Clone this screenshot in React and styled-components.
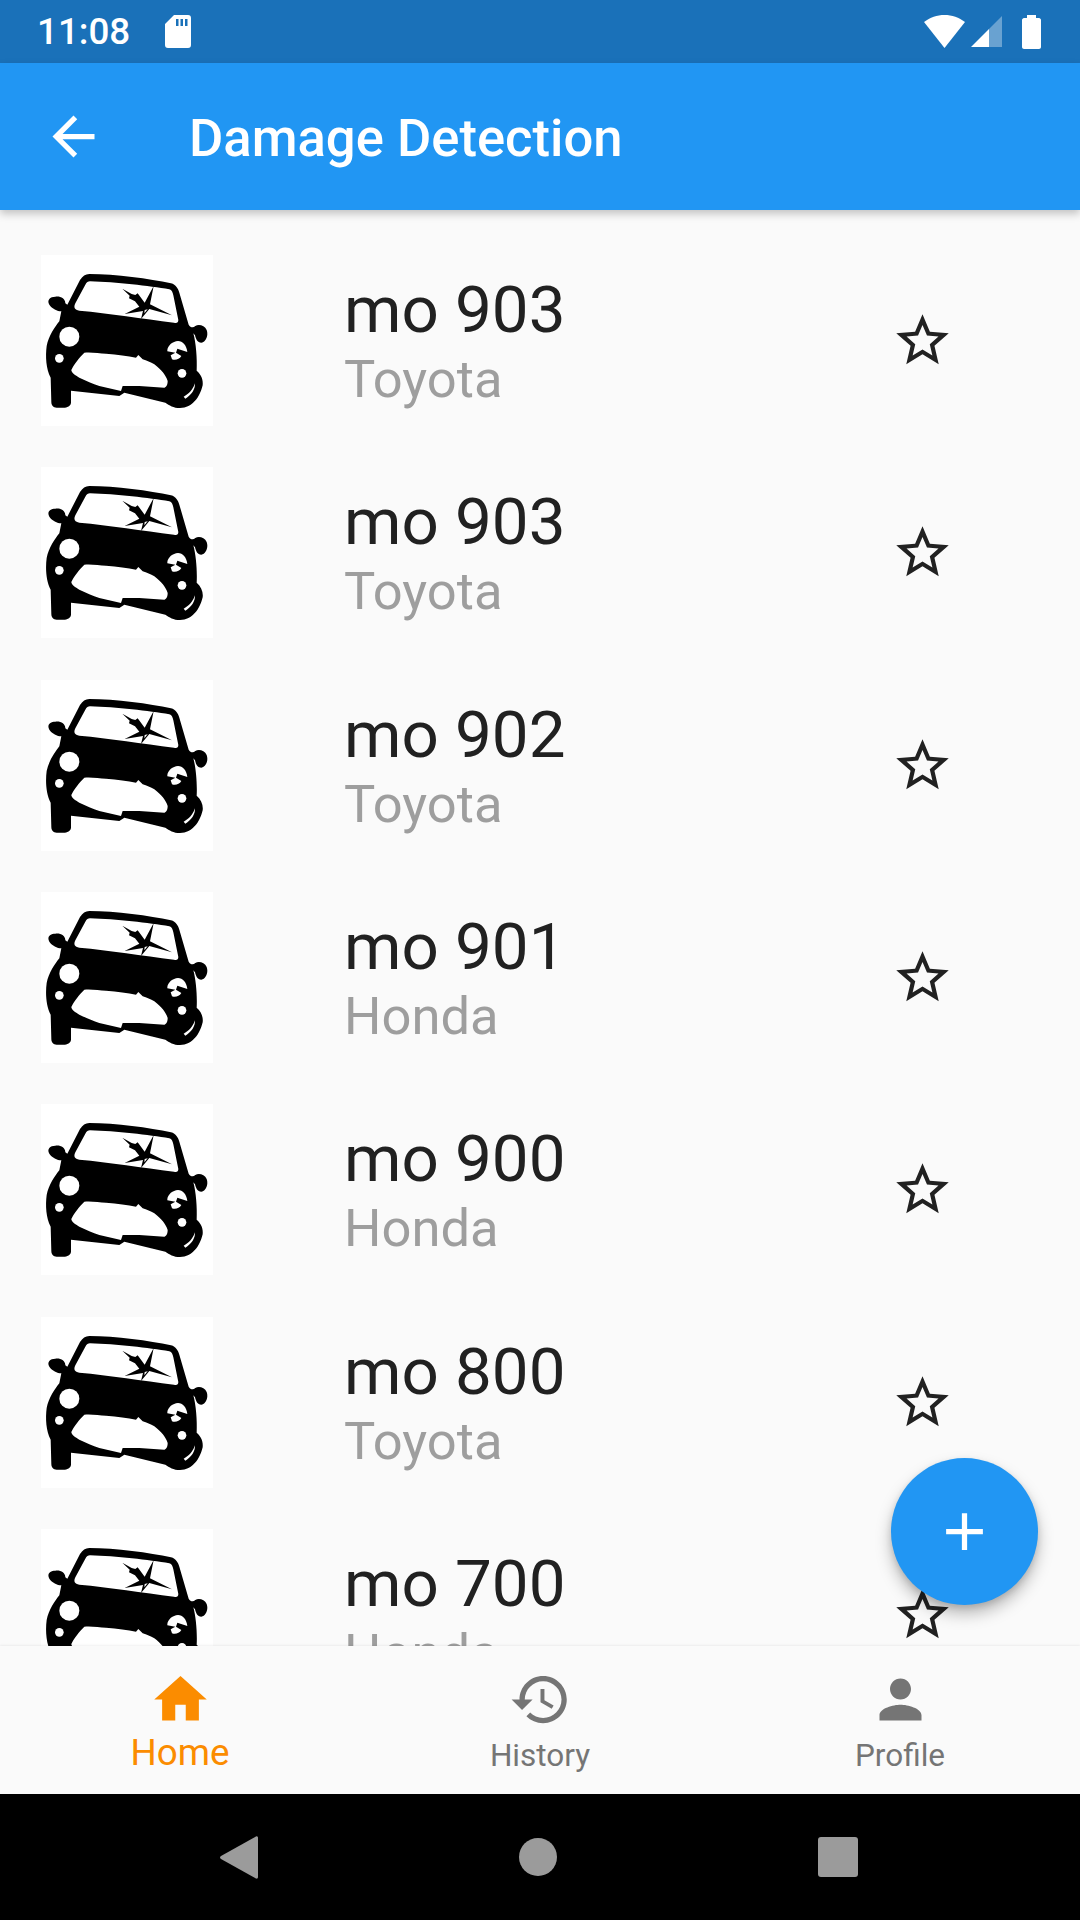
import React from "react";
import styled, { createGlobalStyle } from "styled-components";

const Global = createGlobalStyle`
  html, body { margin: 0; padding: 0; background: #fafafa; }
  body { font-family: Roboto, "Liberation Sans", sans-serif; }
  * { box-sizing: border-box; }
`;

const Screen = styled.div`
  width: 1080px;
  height: 1920px;
  display: flex;
  flex-direction: column;
  overflow: hidden;
  background: #fafafa;
`;

const StatusBar = styled.div`
  height: 63px;
  flex: none;
  background: #1a71b9;
  display: flex;
  align-items: center;
  padding: 0 39px 0 37px;
  color: #fff;
`;

const Time = styled.span`
  font-size: 36.75px;
  font-weight: 500;
  width: 128px;
`;

const StatusRight = styled.div`
  margin-left: auto;
  display: flex;
  align-items: center;
  gap: 6px;
`;

const StatusSpacer = styled.span`
  width: 8px;
`;

const AppBar = styled.header`
  height: 147px;
  flex: none;
  background: #2196f3;
  display: flex;
  align-items: center;
  padding-left: 42px;
  color: #fff;
  position: relative;
  z-index: 2;
  box-shadow: 0 4px 8px rgba(0, 0, 0, 0.22);
`;

const Title = styled.h1`
  margin: 4px 0 0 84px;
  font-size: 52.6px;
  font-weight: 500;
  line-height: 1;
`;

const Main = styled.main`
  flex: 1;
  min-height: 0;
  position: relative;
`;

const List = styled.div`
  height: 100%;
  overflow: hidden;
  padding-top: 24px;
`;

const Row = styled.div`
  height: 212.45px;
  display: flex;
  align-items: center;
  padding: 0 126px 0 41px;
`;

const Thumb = styled.div`
  width: 172px;
  height: 171px;
  flex: none;
  background: #fff;
`;

const RowText = styled.div`
  flex: 1;
  margin-left: 131px;
  display: flex;
  flex-direction: column;
`;

const Name = styled.div`
  font-size: 65.5px;
  color: #212121;
`;

const Maker = styled.div`
  font-size: 52.5px;
  color: #9e9e9e;
`;

const StarWrap = styled.span`
  color: #212121;
`;

const Fab = styled.button`
  position: absolute;
  right: 42px;
  bottom: 41px;
  width: 147px;
  height: 147px;
  border: 0;
  padding: 0;
  border-radius: 50%;
  background: #2196f3;
  color: #fff;
  display: flex;
  align-items: center;
  justify-content: center;
  box-shadow: 0 9px 16px rgba(0, 0, 0, 0.26), 0 3px 6px rgba(0, 0, 0, 0.12);
`;

const BottomNav = styled.nav`
  height: 148px;
  flex: none;
  background: #fafafa;
  display: flex;
  position: relative;
  z-index: 1;
  box-shadow: 0 -1px 2px rgba(0, 0, 0, 0.06);
`;

const NavItem = styled.div`
  flex: 1;
  display: flex;
  flex-direction: column;
  align-items: center;
  padding-top: 22px;
  color: ${(p) => (p.$active ? "#fb8c00" : "#757575")};
  font-size: ${(p) => (p.$active ? "36.75px" : "31.5px")};
  line-height: ${(p) => (p.$active ? "43px" : "37px")};
`;

const NavLabel = styled.span`
  margin-top: ${(p) => (p.$active ? "0" : "6px")};
`;

const SystemBar = styled.div`
  height: 126px;
  flex: none;
  background: #000;
  display: flex;
  align-items: center;
  padding-left: 220px;
  gap: 261px;
  color: #9b9b9b;
`;

const Svg = styled.svg`
  display: block;
  flex: none;
`;

const Icon = ({ d, size = 63 }) => (
  <Svg width={size} height={size} viewBox="0 0 24 24" fill="currentColor">
    <path d={d} />
  </Svg>
);

const ICONS = {
  back: "M20 11H7.83l5.59-5.59L12 4l-8 8 8 8 1.41-1.41L7.83 13H20v-2z",
  star: "M22 9.24l-7.19-.62L12 2 9.19 8.63 2 9.24l5.46 4.73L5.82 21 12 17.27 18.18 21l-1.63-7.03L22 9.24zM12 15.4l-3.76 2.27 1-4.28-3.32-2.88 4.38-.38L12 6.1l1.71 4.04 4.38.38-3.32 2.88 1 4.28L12 15.4z",
  add: "M19 13h-6v6h-2v-6H5v-2h6V5h2v6h6v2z",
  home: "M10 20v-6h4v6h5v-8h3L12 3 2 12h3v8z",
  history: "M13 3c-4.97 0-9 4.03-9 9H1l3.89 3.89.07.14L9 12H6c0-3.87 3.13-7 7-7s7 3.13 7 7-3.13 7-7 7c-1.93 0-3.68-.79-4.94-2.06l-1.42 1.42C8.27 19.99 10.51 21 13 21c4.97 0 9-4.03 9-9s-4.03-9-9-9zm-1 5v5l4.28 2.54.72-1.21-3.5-2.08V8H12z",
  person: "M12 12c2.21 0 4-1.79 4-4s-1.79-4-4-4-4 1.79-4 4 1.79 4 4 4zm0 2c-2.67 0-8 1.34-8 4v2h16v-2c0-2.66-5.33-4-8-4z",
};

const CarLogo = () => (
  <Svg width="172" height="171" viewBox="36 27 514 513">
    <path
      fill="#000"
      d="M180 84 C260 84 360 98 425 112 C440 116 446 128 450 140 L478 236 C484 246 492 246 498 240 C508 234 526 238 532 252 C538 268 530 288 516 290 C504 290 500 280 497 268 L492 262 C500 290 504 340 502 374 C516 386 522 402 520 418 C512 452 490 486 452 486 C432 486 420 478 408 470 L285 440 L270 450 L125 434 L125 470 C124 480 114 485 102 485 L82 485 C72 485 66 478 66 468 L64 395 C50 370 48 330 52 300 C58 270 76 244 90 226 L96 196 C84 196 68 188 60 176 C52 162 62 152 78 152 C94 150 108 158 108 172 L114 176 L152 102 C160 90 168 84 180 84 Z"
    />
    <g fill="#fff">
      <path d="M182 106 C260 108 360 120 420 130 C428 132 430 140 432 148 L447 222 C447 230 442 232 434 230 C340 218 240 202 150 194 C136 192 132 184 138 172 L168 116 C172 108 176 106 182 106 Z" />
      <circle cx="120" cy="272" r="30" />
      <circle cx="90" cy="337" r="13" />
      <circle cx="458" cy="382" r="13" />
      <path d="M165 320 C185 318 210 322 230 323 C265 326 295 330 320 335 L327 327 L340 340 C352 344 364 348 375 355 C395 370 410 388 415 405 C415 418 410 424 405 425 L330 420 L280 420 L275 435 L210 420 C190 414 170 404 150 395 C138 388 126 380 126 372 C132 358 150 334 165 320 Z" />
      <path d="M414 312 C416 298 430 286 446 285 C460 285 472 298 474 318 L444 308 L440 320 L456 330 C450 340 438 344 428 340 L424 328 L438 320 L414 316 Z" />
      <path d="M463 452 C478 444 490 432 497 412 C498 430 486 448 468 458 Z" />
    </g>
    <path
      fill="#000"
      d="M373 120 L362 175 L428 208 L360 189 L335 219 L341 195 L286 204 L330 182 L317 166 L299 157 L301 149 L279 128 L307 144 L318 147 L325 142 L346 170 Z"
    />
    <path fill="#fff" d="M346 192 L355 190 L345 202 Z" />
  </Svg>
);

const WifiIcon = () => (
  <Svg width="41" height="33" viewBox="0 0 41 33">
    <path fill="#fff" d="M20.5 0 C28 0 35 2.5 41 7 L20.5 33 L0 7 C6 2.5 13 0 20.5 0 Z" />
  </Svg>
);

const SignalIcon = () => (
  <Svg width="31" height="31" viewBox="0 0 31 31">
    <path fill="#fff" fillOpacity="0.35" d="M31 0 V31 H18 V13 Z" />
    <path fill="#fff" d="M18 13 V31 H0 Z" />
  </Svg>
);

const BatteryIcon = () => (
  <Svg width="19" height="34" viewBox="0 0 19 34">
    <path fill="#fff" d="M5 0 H14 V3 H17 C18 3 19 4 19 5 V32 C19 33 18 34 17 34 H2 C1 34 0 33 0 32 V5 C0 4 1 3 2 3 H5 Z" />
  </Svg>
);

const SdIcon = () => (
  <Svg width="26" height="33" viewBox="0 0 26 33">
    <path
      fill="#fff"
      fillRule="evenodd"
      d="M9 0 H23 C25 0 26 1 26 3 V30 C26 32 25 33 23 33 H3 C1 33 0 32 0 30 V9 Z M11 4 V11 H13.5 V4 Z M15.5 4 V11 H18 V4 Z M20 4 V11 H22.5 V4 Z"
    />
  </Svg>
);

const BackTriangle = () => (
  <Svg width="38" height="43" viewBox="0 0 38 43">
    <path fill="currentColor" d="M36 0.5 C37.5 0 38 1 38 2 V41 C38 42 37.5 43 36 42.5 L1 23 C-0.3 22 -0.3 21 1 20 Z" />
  </Svg>
);

const HomeCircle = () => (
  <Svg width="38" height="38" viewBox="0 0 38 38">
    <circle cx="19" cy="19" r="19" fill="currentColor" />
  </Svg>
);

const RecentSquare = () => (
  <Svg width="40" height="40" viewBox="0 0 40 40">
    <rect width="40" height="40" rx="3" fill="currentColor" />
  </Svg>
);

const items = [
  ["mo 903", "Toyota"],
  ["mo 903", "Toyota"],
  ["mo 902", "Toyota"],
  ["mo 901", "Honda"],
  ["mo 900", "Honda"],
  ["mo 800", "Toyota"],
  ["mo 700", "Honda"],
];

export default function App() {
  return (
    <Screen>
      <Global />
      <StatusBar>
        <Time>11:08</Time>
        <SdIcon />
        <StatusRight>
          <WifiIcon />
          <SignalIcon />
          <StatusSpacer />
          <BatteryIcon />
        </StatusRight>
      </StatusBar>
      <AppBar>
        <Icon d={ICONS.back} />
        <Title>Damage Detection</Title>
      </AppBar>
      <Main>
        <List>
          {items.map(([name, maker], i) => (
            <Row key={i}>
              <Thumb>
                <CarLogo />
              </Thumb>
              <RowText>
                <Name>{name}</Name>
                <Maker>{maker}</Maker>
              </RowText>
              <StarWrap>
                <Icon d={ICONS.star} />
              </StarWrap>
            </Row>
          ))}
        </List>
        <Fab>
          <Icon d={ICONS.add} />
        </Fab>
      </Main>
      <BottomNav>
        <NavItem $active>
          <Icon d={ICONS.home} />
          <NavLabel $active>Home</NavLabel>
        </NavItem>
        <NavItem>
          <Icon d={ICONS.history} />
          <NavLabel>History</NavLabel>
        </NavItem>
        <NavItem>
          <Icon d={ICONS.person} />
          <NavLabel>Profile</NavLabel>
        </NavItem>
      </BottomNav>
      <SystemBar>
        <BackTriangle />
        <HomeCircle />
        <RecentSquare />
      </SystemBar>
    </Screen>
  );
}
